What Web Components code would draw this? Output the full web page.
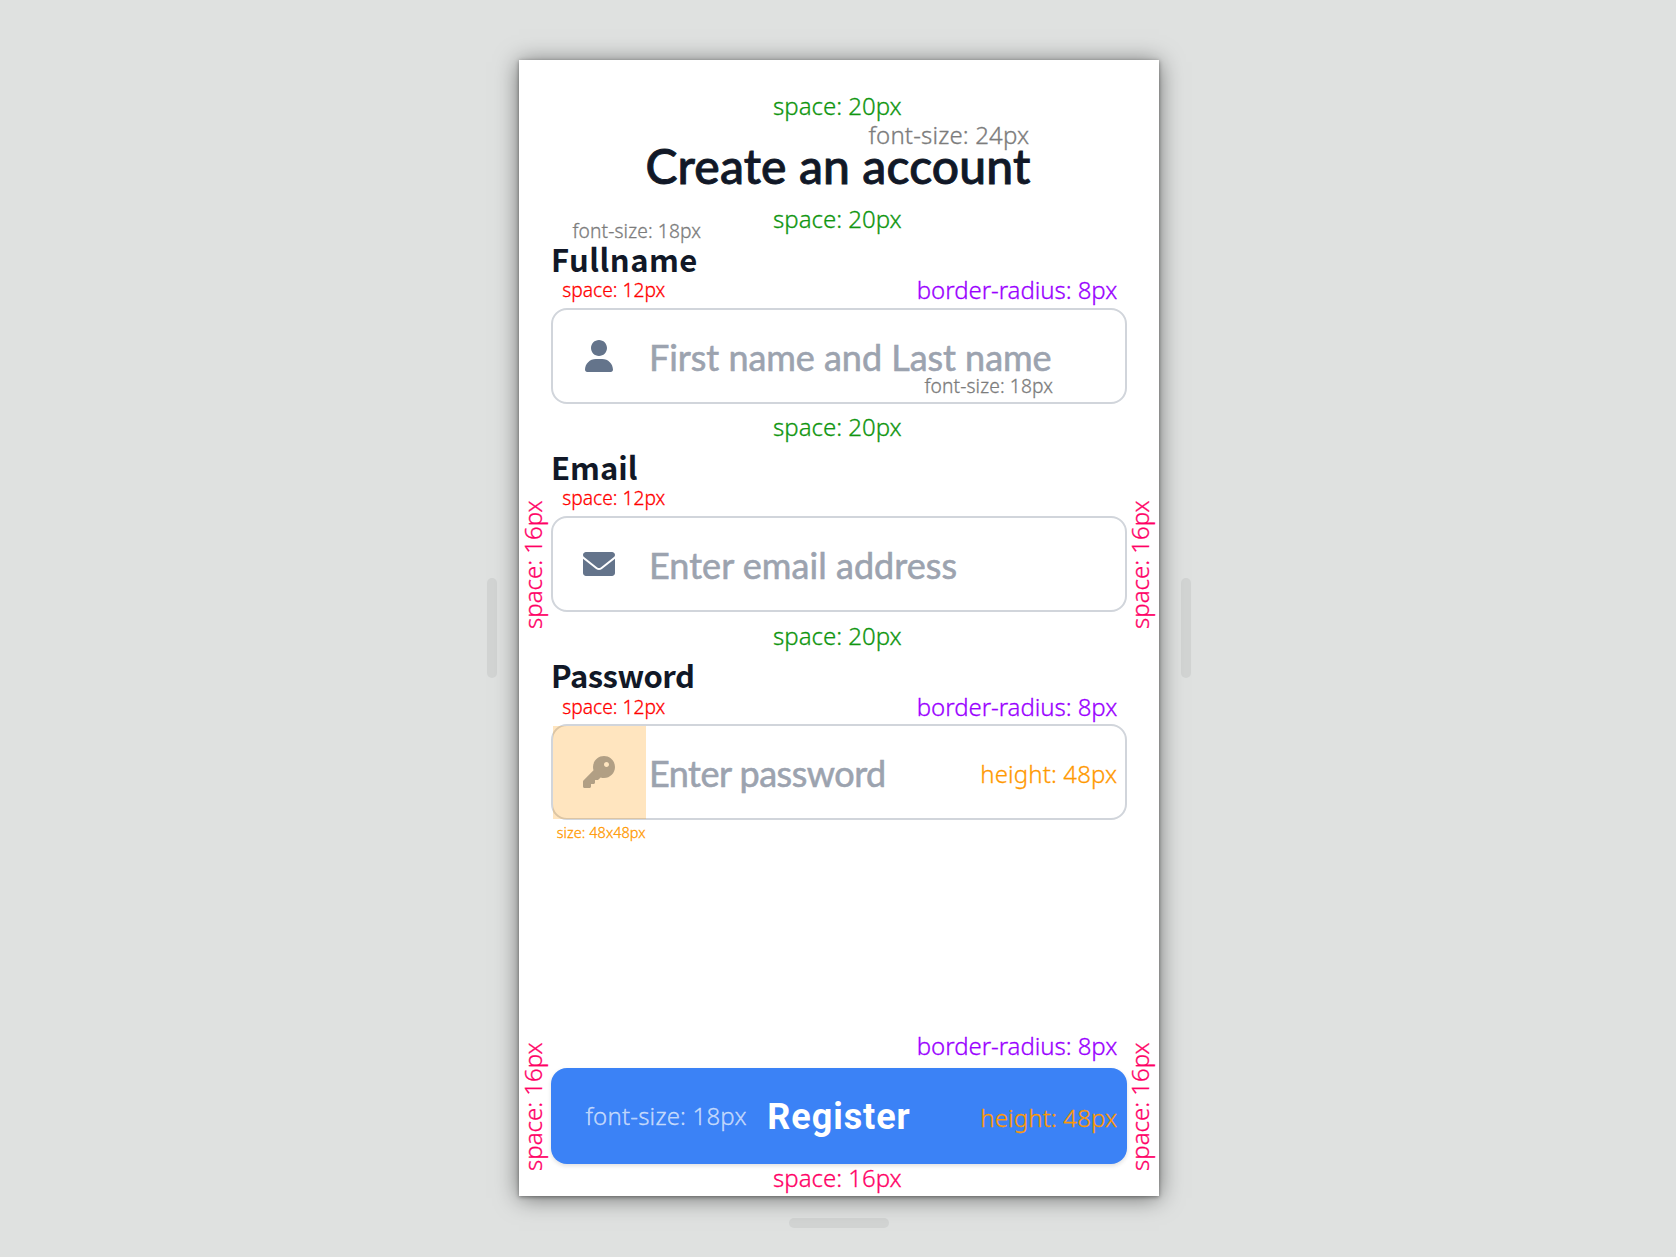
<!DOCTYPE html>
<html lang="en">
<head>
<meta charset="utf-8">
<title>Create an account</title>
<style>
  html, body { margin: 0; height: 100%; }
  body { background: #dfe1e0; overflow: hidden; }
</style>
</head>
<body>
<device-stage>
  <register-screen></register-screen>
</device-stage>

<script>
const FACE = "Lato, 'Noto Sans', sans-serif";
const LABEL_FACE = "'Noto Sans CJK SC', 'Noto Sans', sans-serif";
const ICONS = {
  user: '<path transform="translate(32 0)" d="M224 256c70.7 0 128-57.31 128-128s-57.3-128-128-128C153.3 0 96 57.31 96 128S153.3 256 224 256zM274.7 304H173.3C77.61 304 0 381.6 0 477.3c0 19.14 15.52 34.67 34.66 34.67h378.7C432.5 512 448 496.5 448 477.3C448 381.6 370.4 304 274.7 304z"/>',
  envelope: '<path d="M256 352c-16.53 0-33.06-5.422-47.16-16.41L0 173.2V400C0 426.5 21.49 448 48 448h416c26.51 0 48-21.49 48-48V173.2l-208.8 162.5C289.1 346.6 272.5 352 256 352zM16.29 145.3l212.2 165.1c16.19 12.6 38.87 12.6 55.06 0l212.2-165.1C505.1 137.3 512 125 512 112C512 85.49 490.5 64 464 64h-416C21.49 64 0 85.49 0 112C0 125 6.01 137.3 16.29 145.3z"/>',
  key: '<path opacity=".67" d="M282.3 343.7L248.1 376.1C244.5 381.5 238.4 384 232 384H192V424C192 437.3 181.3 448 168 448H128V488C128 501.3 117.3 512 104 512H24C10.75 512 0 501.3 0 488V408C0 401.6 2.529 395.5 7.029 391L168.3 229.7C162.9 212.8 160 194.7 160 176C160 78.8 238.8 0 336 0C433.2 0 512 78.8 512 176C512 273.2 433.2 352 336 352C317.3 352 299.2 349.1 282.3 343.7zM376 176C398.1 176 416 158.1 416 136C416 113.9 398.1 96 376 96C353.9 96 336 113.9 336 136C336 158.1 353.9 176 376 176z"/>'
};

class Base extends HTMLElement {
  connectedCallback() {
    if (!this.shadowRoot) this.attachShadow({ mode: 'open' }).innerHTML = this.render();
  }
}

// Viewport backdrop with its three resize handles around the device.
customElements.define('device-stage', class extends Base {
  render() {
    return `<style>
      :host { display: flex; flex-direction: column; align-items: center; padding-top: 60px; box-sizing: border-box; height: 1257px; width: 1678px; }
      .row { display: flex; align-items: center; gap: 22px; }
      i { display: block; background: #d2d4d3; border-radius: 5px; width: 10px; height: 100px; }
      i.b { width: 100px; height: 10px; margin-top: 22px; }
    </style>
    <div class="row"><i></i><slot></slot><i></i></div><i class="b"></i>`;
  }
});

// Redline note: x / y give the start of the text's baseline inside the screen.
customElements.define('spec-note', class extends Base {
  render() {
    const a = n => this.getAttribute(n);
    const size = parseFloat(a('size') || 24), up = this.hasAttribute('up');
    const x = parseFloat(a('x')), y = parseFloat(a('y')), rise = size * 0.888;
    return `<style>
      :host { position: absolute; left: ${up ? x - rise : x}px; top: ${up ? y : y - rise}px;
        font: 300 ${size}px/1 'Noto Sans', sans-serif; letter-spacing: ${a('ls') || 0}px; white-space: nowrap;
        color: ${a('color')}; -webkit-text-stroke: 0.3px currentColor; z-index: 2;
        ${up ? 'transform: rotate(-90deg); transform-origin: 0 0;' : ''} }
    </style><slot></slot>`;
  }
});

customElements.define('form-field', class extends Base {
  render() {
    const a = n => this.getAttribute(n);
    return `<style>
      :host { display: flex; flex-direction: column; gap: 34px; font-family: ${FACE}; }
      .label { font: 700 31px/31px ${LABEL_FACE}; color: #111827; letter-spacing: ${a('label-ls')}px; }
      .box { display: flex; align-items: center; box-sizing: border-box; height: 96px; border: 2px solid #d1d5db; border-radius: 16px; background: #fff; }
      .cell { display: flex; align-items: center; justify-content: center; width: 92px; height: 92px; }
      svg { display: block; width: 32px; height: 32px; fill: #64748b; }
      .ph { padding: 1px 0 0 4px; font-size: 36px; line-height: 36px; color: #9ca3af; -webkit-text-stroke: 0.6px #9ca3af; white-space: nowrap; letter-spacing: ${a('ls')}px; }
    </style>
    <div class="label">${a('label')}</div>
    <div class="box"><div class="cell"><svg viewBox="0 0 512 512">${ICONS[a('icon')]}</svg></div><div class="ph">${a('hint')}</div></div>`;
  }
});

customElements.define('primary-button', class extends Base {
  render() {
    return `<style>
      :host { display: flex; align-items: center; justify-content: center; height: 96px; box-sizing: border-box; padding-top: 2px;
        background: #3b82f6; border-radius: 16px; color: #fff; font: 700 36px/36px Roboto, sans-serif; letter-spacing: 0.95px;
        box-shadow: 0 2px 4px rgba(0,0,0,.12); }
    </style><slot></slot>`;
  }
});

customElements.define('register-screen', class extends Base {
  render() {
    const green = '#109610', gray = '#7c7c7c', red = '#ff0000', purple = '#9a00ff', pink = '#ff0066', orange = '#ff9900';
    return `<style>
      :host { display: flex; flex-direction: column; position: relative; box-sizing: border-box; width: 640px; height: 1136px;
        padding: 82px 32px 32px; background: #fff;
        box-shadow: 0 1px 4px rgba(0,0,0,.4), 0 2px 22px rgba(0,0,0,.5); }
      h1 { margin: 0 0 53px; padding-right: 2px; text-align: center; font: 500 48px/48px ${FACE}; letter-spacing: 0.15px; color: #111827; -webkit-text-stroke: 0.9px #111827; }
      .fields { display: flex; flex-direction: column; gap: 47px; }
      primary-button { margin-top: auto; }
      .mark { position: absolute; left: 34px; top: 666px; width: 93px; height: 93px; background: rgba(255,153,0,.25); }
    </style>
    <h1>Create an account</h1>
    <div class="fields">
      <form-field label="Fullname" label-ls="0.5" icon="user" hint="First name and Last name" ls="-0.04"></form-field>
      <form-field label="Email" label-ls="0" icon="envelope" hint="Enter email address" ls="0.05"></form-field>
      <form-field label="Password" label-ls="-0.5" icon="key" hint="Enter password" ls="-0.5"></form-field>
    </div>
    <primary-button>Register</primary-button>
    <div class="mark"></div>
    <spec-note x="254" y="55" color="${green}">space: 20px</spec-note>
    <spec-note x="349.5" y="84.5" ls="0.15" color="${gray}">font-size: 24px</spec-note>
    <spec-note x="254" y="168.5" color="${green}">space: 20px</spec-note>
    <spec-note x="53.5" y="177.6" size="19.2" ls="0.12" color="${gray}">font-size: 18px</spec-note>
    <spec-note x="43.3" y="237.5" size="19.2" color="${red}">space: 12px</spec-note>
    <spec-note x="397.8" y="239.5" ls="-0.06" color="${purple}">border-radius: 8px</spec-note>
    <spec-note x="405.5" y="332.6" size="19.2" ls="0.12" color="${gray}">font-size: 18px</spec-note>
    <spec-note x="254" y="376.2" color="${green}">space: 20px</spec-note>
    <spec-note x="43.3" y="445.5" size="19.2" color="${red}">space: 12px</spec-note>
    <spec-note x="254" y="585.5" color="${green}">space: 20px</spec-note>
    <spec-note x="43.3" y="654.5" size="19.2" color="${red}">space: 12px</spec-note>
    <spec-note x="397.8" y="656" ls="-0.06" color="${purple}">border-radius: 8px</spec-note>
    <spec-note x="461.3" y="723" ls="0.12" color="${orange}">height: 48px</spec-note>
    <spec-note x="37.7" y="779" size="14.4" ls="0.1" color="${orange}">size: 48x48px</spec-note>
    <spec-note x="397.8" y="995.5" ls="-0.06" color="${purple}">border-radius: 8px</spec-note>
    <spec-note x="66.5" y="1065" ls="0.18" color="rgba(255,255,255,.65)">font-size: 18px</spec-note>
    <spec-note x="461.3" y="1067" ls="0.12" color="${orange}">height: 48px</spec-note>
    <spec-note x="254" y="1127.3" color="${pink}">space: 16px</spec-note>
    <spec-note up x="23.3" y="569" color="${pink}">space: 16px</spec-note>
    <spec-note up x="630.3" y="569" color="${pink}">space: 16px</spec-note>
    <spec-note up x="23.3" y="1110.5" color="${pink}">space: 16px</spec-note>
    <spec-note up x="630.3" y="1110.5" color="${pink}">space: 16px</spec-note>`;
  }
});
</script>
</body>
</html>
